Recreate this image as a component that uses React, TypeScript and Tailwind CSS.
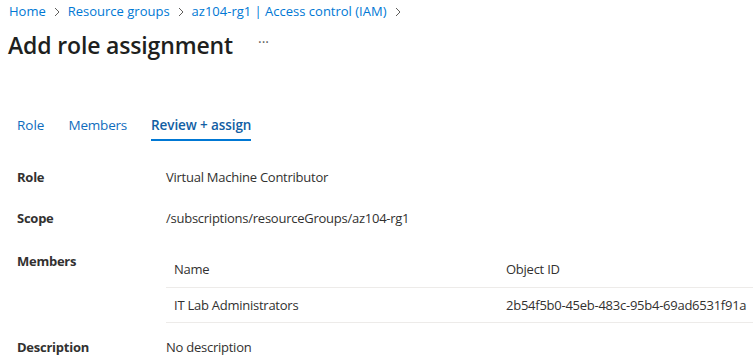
import React from 'react';

const crumbs = ['Home', 'Resource groups', 'az104-rg1 | Access control (IAM)'];

function Chevron() {
  return (
    <svg width="8" height="12" viewBox="0 0 8 12" className="mx-[7px]">
      <path d="M2 2l4 4-4 4" fill="none" stroke="#605e5c" strokeWidth="1" />
    </svg>
  );
}

export default function App() {
  return (
    <div
      className="w-[753px] h-[361px] overflow-hidden bg-white text-[#323130]"
      style={{ fontFamily: '"Open Sans", "Noto Sans", sans-serif' }}
    >
      <nav className="flex items-center pl-[9px] pt-[3px] h-[20px] text-[13px] text-[#0078d4]">
        {crumbs.map((c) => (
          <React.Fragment key={c}>
            <span>{c}</span>
            <Chevron />
          </React.Fragment>
        ))}
      </nav>

      <div className="flex items-center pl-[8px] mt-[10px] h-[30px]">
        <h1 className="text-[23px] font-semibold text-[#201f1e] tracking-[-0.15px]">Add role assignment</h1>
        <span className="ml-[25px] text-[14px] text-[#605e5c] leading-none -mt-[6px]">···</span>
      </div>

      <div className="flex pl-[17px] mt-[54px] text-[13.5px]">
        <div className="pb-[4px] pt-[1px] mr-[24px] text-[#0f6cbd]">Role</div>
        <div className="pb-[4px] pt-[1px] mr-[24px] text-[#0f6cbd] tracking-[-0.2px]">Members</div>
        <div className="pb-[4px] pt-[1px] font-semibold text-[#115ea3] border-b-2 border-[#0078d4] tracking-[-0.1px]">Review + assign</div>
      </div>

      <div className="pl-[17px] mt-[26px] text-[13px] tracking-[-0.25px]">
        <div className="flex h-[20px] items-center">
          <div className="w-[149px] font-bold">Role</div>
          <div>Virtual Machine Contributor</div>
        </div>
        <div className="flex h-[20px] items-center mt-[21px]">
          <div className="w-[149px] font-bold">Scope</div>
          <div>/subscriptions/resourceGroups/az104-rg1</div>
        </div>
        <div className="flex mt-[23px]">
          <div className="w-[149px] font-bold leading-[20px]">Members</div>
          <div className="flex-1">
            <div className="flex h-[37px] items-center border-b border-[#edebe9] pl-[8px] pt-[1px]">
              <div className="w-[332px]">Name</div>
              <div>Object ID</div>
            </div>
            <div className="flex h-[35px] items-center border-b border-[#edebe9] pl-[8px]">
              <div className="w-[332px]">IT Lab Administrators</div>
              <div>2b54f5b0-45eb-483c-95b4-69ad6531f91a</div>
            </div>
          </div>
        </div>
        <div className="flex h-[20px] items-center mt-[14px]">
          <div className="w-[149px] font-bold">Description</div>
          <div>No description</div>
        </div>
      </div>
    </div>
  );
}
